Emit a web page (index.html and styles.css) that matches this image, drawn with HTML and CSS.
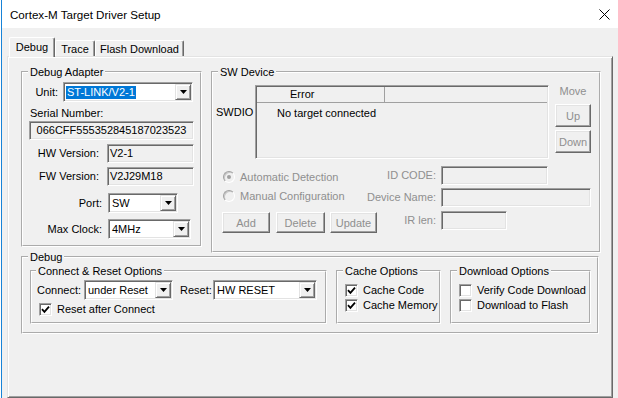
FILE: index.html
```html
<!DOCTYPE html>
<html lang="en">
<head>
  <meta charset="UTF-8">
  <title>Cortex-M Target Driver Setup</title>
  <link rel="stylesheet" href="styles.css">
</head>
<body>

  <div class="window">
    <div class="titlebar">
      <span class="title">Cortex-M Target Driver Setup</span>
      <svg class="close" width="11" height="11" viewBox="0 0 11 11">
        <path d="M0.5 0.5 L10.5 10.5 M10.5 0.5 L0.5 10.5" stroke="#000" stroke-width="1" fill="none"/>
      </svg>
    </div>

    <div class="body">
      <div class="tabs">
        <div class="tab active tab-debug">Debug</div>
        <div class="tab tab-trace">Trace</div>
        <div class="tab tab-flash">Flash Download</div>
      </div>

      <div class="panel">
        <div class="top-row">

          <!-- Debug Adapter -->
          <fieldset class="group adapter">
            <legend>Debug Adapter</legend>
            <div class="adapter-body">
              <div class="row unit-row">
                <span class="lbl lbl-unit">Unit:</span>
                <div class="combo combo-unit">
                  <span class="combo-text"><span class="sel">ST-LINK/V2-1</span></span>
                  <span class="combo-btn"><svg width="7" height="4" viewBox="0 0 7 4"><polygon points="0,0 7,0 3.5,4" fill="#000"/></svg></span>
                </div>
              </div>
              <div class="serial-lbl">Serial Number:</div>
              <div class="field serial">066CFF555352845187023523</div>
              <div class="row ver-row hw-row">
                <span class="lbl lbl-ver">HW Version:</span>
                <div class="field ver">V2-1</div>
              </div>
              <div class="row ver-row">
                <span class="lbl lbl-ver">FW Version:</span>
                <div class="field ver">V2J29M18</div>
              </div>
              <div class="row port-row">
                <span class="lbl lbl-port">Port:</span>
                <div class="combo combo-port">
                  <span class="combo-text">SW</span>
                  <span class="combo-btn"><svg width="7" height="4" viewBox="0 0 7 4"><polygon points="0,0 7,0 3.5,4" fill="#000"/></svg></span>
                </div>
              </div>
              <div class="row clock-row">
                <span class="lbl lbl-port">Max Clock:</span>
                <div class="combo combo-clock">
                  <span class="combo-text">4MHz</span>
                  <span class="combo-btn"><svg width="7" height="4" viewBox="0 0 7 4"><polygon points="0,0 7,0 3.5,4" fill="#000"/></svg></span>
                </div>
              </div>
            </div>
          </fieldset>

          <!-- SW Device -->
          <fieldset class="group swdev">
            <legend>SW Device</legend>
            <div class="sw-top">
              <span class="swdio">SWDIO</span>
              <div class="list">
                <div class="list-head">
                  <span class="head-cell">Error</span>
                  <span class="head-rest"></span>
                </div>
                <div class="list-row">No target connected</div>
              </div>
              <div class="move-col">
                <span class="move-lbl">Move</span>
                <div class="btn btn-up">Up</div>
                <div class="btn btn-down">Down</div>
              </div>
            </div>
            <div class="sw-bottom">
              <div class="sw-left">
                <div class="radio-row auto-row"><span class="radio on"></span>Automatic Detection</div>
                <div class="radio-row manual-row"><span class="radio"></span>Manual Configuration</div>
                <div class="btn-row">
                  <div class="btn btn-add">Add</div>
                  <div class="btn btn-del">Delete</div>
                  <div class="btn btn-upd">Update</div>
                </div>
              </div>
              <div class="sw-right">
                <div class="row id-row">
                  <span class="lbl lbl-id">ID CODE:</span>
                  <div class="field f-id"></div>
                </div>
                <div class="row id-row dev-row">
                  <span class="lbl lbl-id">Device Name:</span>
                  <div class="field f-dev"></div>
                </div>
                <div class="row id-row ir-row">
                  <span class="lbl lbl-id">IR len:</span>
                  <div class="field f-ir"></div>
                </div>
              </div>
            </div>
          </fieldset>
        </div>

        <!-- Debug -->
        <fieldset class="group debug">
          <legend>Debug</legend>
          <div class="debug-row">
            <fieldset class="group connect">
              <legend>Connect &amp; Reset Options</legend>
              <div class="row conn-row">
                <span class="lbl lbl-conn">Connect:</span>
                <div class="combo combo-conn">
                  <span class="combo-text">under Reset</span>
                  <span class="combo-btn"><svg width="7" height="4" viewBox="0 0 7 4"><polygon points="0,0 7,0 3.5,4" fill="#000"/></svg></span>
                </div>
                <span class="lbl lbl-reset">Reset:</span>
                <div class="combo combo-reset">
                  <span class="combo-text">HW RESET</span>
                  <span class="combo-btn"><svg width="7" height="4" viewBox="0 0 7 4"><polygon points="0,0 7,0 3.5,4" fill="#000"/></svg></span>
                </div>
              </div>
              <div class="check-row reset-row">
                <span class="box"><svg width="9" height="9" viewBox="0 0 9 9"><polyline points="1,4.2 3.4,6.8 8,1.6" stroke="#000" stroke-width="1.8" fill="none"/></svg></span>
                Reset after Connect
              </div>
            </fieldset>

            <fieldset class="group cache">
              <legend>Cache Options</legend>
              <div class="opts">
                <div class="check-row"><span class="box"><svg width="9" height="9" viewBox="0 0 9 9"><polyline points="1,4.2 3.4,6.8 8,1.6" stroke="#000" stroke-width="1.8" fill="none"/></svg></span>Cache Code</div>
                <div class="check-row"><span class="box"><svg width="9" height="9" viewBox="0 0 9 9"><polyline points="1,4.2 3.4,6.8 8,1.6" stroke="#000" stroke-width="1.8" fill="none"/></svg></span>Cache Memory</div>
              </div>
            </fieldset>

            <fieldset class="group download">
              <legend>Download Options</legend>
              <div class="opts">
                <div class="check-row"><span class="box"></span>Verify Code Download</div>
                <div class="check-row"><span class="box"></span>Download to Flash</div>
              </div>
            </fieldset>
          </div>
        </fieldset>
      </div>
    </div>
  </div>

</body>
</html>
```

FILE: styles.css
```css
body {
  margin: 0;
  background: #fff;
  font-family: "Liberation Sans", Arial, sans-serif;
  font-size: 11px;
  color: #000;
}

.window {
  width: 617px;
  height: 398px;
  margin-left: 1px;
  border-left: 1px solid #1883d7;
  box-sizing: border-box;
  display: flex;
  flex-direction: column;
  overflow: hidden;
}

.titlebar {
  height: 28px;
  flex-shrink: 0;
  background: #fff;
  display: flex;
  align-items: center;
  justify-content: space-between;
  padding: 0 8px 0 8px;
}

.title {
  font-size: 11.6px;
}

.body {
  flex: 1;
  background: #f0f0f0;
  padding-top: 9px;
}

/* tabs */
.tabs {
  display: flex;
  align-items: flex-end;
  height: 19px;
  margin-left: 7px;
}

.tab {
  height: 16px;
  box-sizing: border-box;
  padding-top: 2px;
  line-height: 13px;
  text-align: center;
  border: 1px solid;
  border-bottom: none;
  border-color: #fff #696969 #696969 #fff;
  box-shadow: inset -1px 0 #a0a0a0;
  border-radius: 2px 2px 0 0;
  background: #f0f0f0;
}

.tab.active {
  height: 20px;
  margin-bottom: -1px;
  padding-top: 3px;
  position: relative;
  z-index: 1;
}

.tab-debug { width: 46px; }
.tab-trace { width: 40px; }
.tab-flash { width: 89px; }

.panel {
  margin-left: 5px;
  width: 606px;
  height: 342px;
  box-sizing: border-box;
  border: 1px solid;
  border-color: #e3e3e3 #696969 #696969 #e3e3e3;
  box-shadow: inset 1px 1px #fff, inset -1px -1px #a0a0a0;
  padding: 8px 0 0 13px;
}

/* group boxes */
.group {
  margin: 0;
  padding: 0;
  min-width: 0;
  box-sizing: border-box;
  border: 2px groove #fff;
}

.group legend {
  padding: 0 2px;
  margin-left: 5px;
  line-height: 14px;
}

.top-row {
  display: flex;
  align-items: flex-start;
  gap: 9px;
}

.row {
  display: flex;
  align-items: center;
}

.lbl {
  flex-shrink: 0;
  text-align: right;
  line-height: 13px;
}

/* combo boxes and fields */
.combo {
  display: flex;
  flex-shrink: 0;
  height: 20px;
  box-sizing: border-box;
  background: #fff;
  border: 1px solid;
  border-color: #a0a0a0 #fff #fff #a0a0a0;
  box-shadow: inset 1px 1px #696969, inset -1px -1px #e3e3e3;
  padding: 1px;
}

.combo-text {
  flex: 1;
  line-height: 16px;
  padding-left: 2px;
  white-space: nowrap;
  overflow: hidden;
}

.sel {
  display: inline-block;
  margin-left: -1px;
  padding: 0 1px;
  line-height: 13px;
  background: #0078d7;
  color: #fff;
}

.combo-btn {
  width: 16px;
  flex-shrink: 0;
  box-sizing: border-box;
  background: #f0f0f0;
  border: 1px solid;
  border-color: #e3e3e3 #696969 #696969 #e3e3e3;
  box-shadow: inset 1px 1px #fff, inset -1px -1px #a0a0a0;
  display: flex;
  align-items: center;
  justify-content: center;
}

.field {
  height: 19px;
  flex-shrink: 0;
  box-sizing: border-box;
  background: #f0f0f0;
  border: 1px solid;
  border-color: #a0a0a0 #fff #fff #a0a0a0;
  box-shadow: inset 1px 1px #696969, inset -1px -1px #e3e3e3;
  line-height: 17px;
  padding-left: 2px;
  white-space: nowrap;
}

.btn {
  flex-shrink: 0;
  box-sizing: border-box;
  background: #f0f0f0;
  border: 1px solid;
  border-color: #fff #696969 #696969 #fff;
  box-shadow: inset -1px -1px #a0a0a0, inset 1px 1px #e3e3e3;
  color: #8f8f8f;
  display: flex;
  align-items: center;
  justify-content: center;
}

/* Debug Adapter */
.adapter {
  width: 181px;
}

.adapter-body {
  padding-bottom: 6px;
}

.unit-row { margin-top: 3px; }
.lbl-unit { width: 35px; margin-right: 5px; }
.combo-unit { width: 130px; }

.serial-lbl {
  margin: 5px 0 0 7px;
  line-height: 13px;
}

.field.serial {
  width: 165px;
  margin: 1px 0 0 6px;
  padding-left: 0;
  text-align: center;
}

.ver-row { margin-top: 4px; }
.lbl-ver { width: 76px; margin-right: 8px; }
.field.ver { width: 87px; }

.port-row { margin-top: 7px; }
.clock-row { margin-top: 6px; }
.lbl-port { width: 79px; margin-right: 6px; }
.combo-port { width: 70px; }
.combo-clock { width: 83px; }

/* SW Device */
.swdev {
  width: 390px;
}

.sw-top {
  display: flex;
  align-items: flex-start;
  margin-top: 6px;
}

.swdio {
  width: 39px;
  margin: 21px 0 0 3px;
  line-height: 13px;
}

.list {
  width: 294px;
  height: 74px;
  box-sizing: border-box;
  background: #f0f0f0;
  border: 1px solid;
  border-color: #a0a0a0 #fff #fff #a0a0a0;
  box-shadow: inset 1px 1px #696969, inset -1px -1px #e3e3e3;
  padding: 1px;
}

.list-head {
  display: flex;
  height: 16px;
  box-sizing: border-box;
  border-bottom: 1px solid #a0a0a0;
}

.head-cell {
  width: 128px;
  box-sizing: border-box;
  border-right: 1px solid #a0a0a0;
  padding-left: 33px;
  line-height: 15px;
}

.head-rest {
  flex: 1;
}

.list-row {
  padding: 4px 0 0 20px;
  line-height: 13px;
}

.move-col {
  width: 36px;
  margin-left: 6px;
  display: flex;
  flex-direction: column;
  align-items: center;
}

.move-lbl {
  line-height: 13px;
  color: #8f8f8f;
}

.btn-up,
.btn-down {
  width: 36px;
  height: 23px;
}

.btn-up { margin-top: 6px; }
.btn-down { margin-top: 3px; }

.sw-bottom {
  display: flex;
  margin-top: 7px;
  padding: 0 0 18px 9px;
}

.sw-left {
  width: 145px;
  flex-shrink: 0;
}

.radio-row {
  display: flex;
  align-items: center;
  height: 14px;
  color: #8f8f8f;
  white-space: nowrap;
}

.auto-row { margin-top: 4px; }
.manual-row { margin-top: 5px; }

.radio {
  width: 12px;
  height: 12px;
  box-sizing: border-box;
  border-radius: 50%;
  border: 1px solid;
  border-color: #a0a0a0 #fff #fff #a0a0a0;
  box-shadow: inset 1px 1px #c8c8c8;
  background: #f0f0f0;
  margin: 0 5px 0 1px;
  display: flex;
  align-items: center;
  justify-content: center;
}

.radio.on::after {
  content: "";
  width: 4px;
  height: 4px;
  border-radius: 50%;
  background: #a0a0a0;
}

.btn-row {
  display: flex;
  margin-top: 9px;
}

.btn-row .btn { height: 21px; }
.btn-add { width: 48px; }
.btn-del { width: 49px; margin-left: 6px; }
.btn-upd { width: 47px; margin-left: 5px; }

.dev-row { margin-top: 3px; }
.ir-row { margin-top: 4px; }

.lbl-id {
  width: 69px;
  margin-right: 5px;
  color: #8f8f8f;
  white-space: nowrap;
}

.f-id { width: 107px; }
.f-dev { width: 150px; }
.f-ir { width: 66px; }

/* Debug */
.debug {
  width: 578px;
  margin-top: -3px;
}

.debug-row {
  display: flex;
  align-items: stretch;
  gap: 9px;
  padding: 0 0 8px 7px;
}

.connect { width: 297px; }
.connect legend { margin-left: 4px; }
.cache { width: 105px; }
.download { width: 141px; }

.conn-row {
  margin-top: 2px;
  padding-left: 5px;
}

.lbl-conn { width: 47px; text-align: left; }
.combo-conn { width: 89px; }
.lbl-reset { width: 33px; margin-left: 7px; text-align: left; }
.combo-reset { width: 104px; }

.check-row {
  display: flex;
  align-items: center;
  height: 13px;
  line-height: 13px;
  white-space: nowrap;
}

.reset-row {
  margin-top: 3px;
  padding: 0 0 6px 7px;
  box-sizing: content-box;
}

.box {
  width: 13px;
  height: 13px;
  flex-shrink: 0;
  box-sizing: border-box;
  background: #fff;
  border: 1px solid;
  border-color: #a0a0a0 #fff #fff #a0a0a0;
  box-shadow: inset 1px 1px #696969, inset -1px -1px #e3e3e3;
  margin-right: 5px;
  display: flex;
  align-items: center;
  justify-content: center;
}

.opts {
  display: flex;
  flex-direction: column;
  gap: 2px;
  padding: 6px 0 0 7px;
}
```
